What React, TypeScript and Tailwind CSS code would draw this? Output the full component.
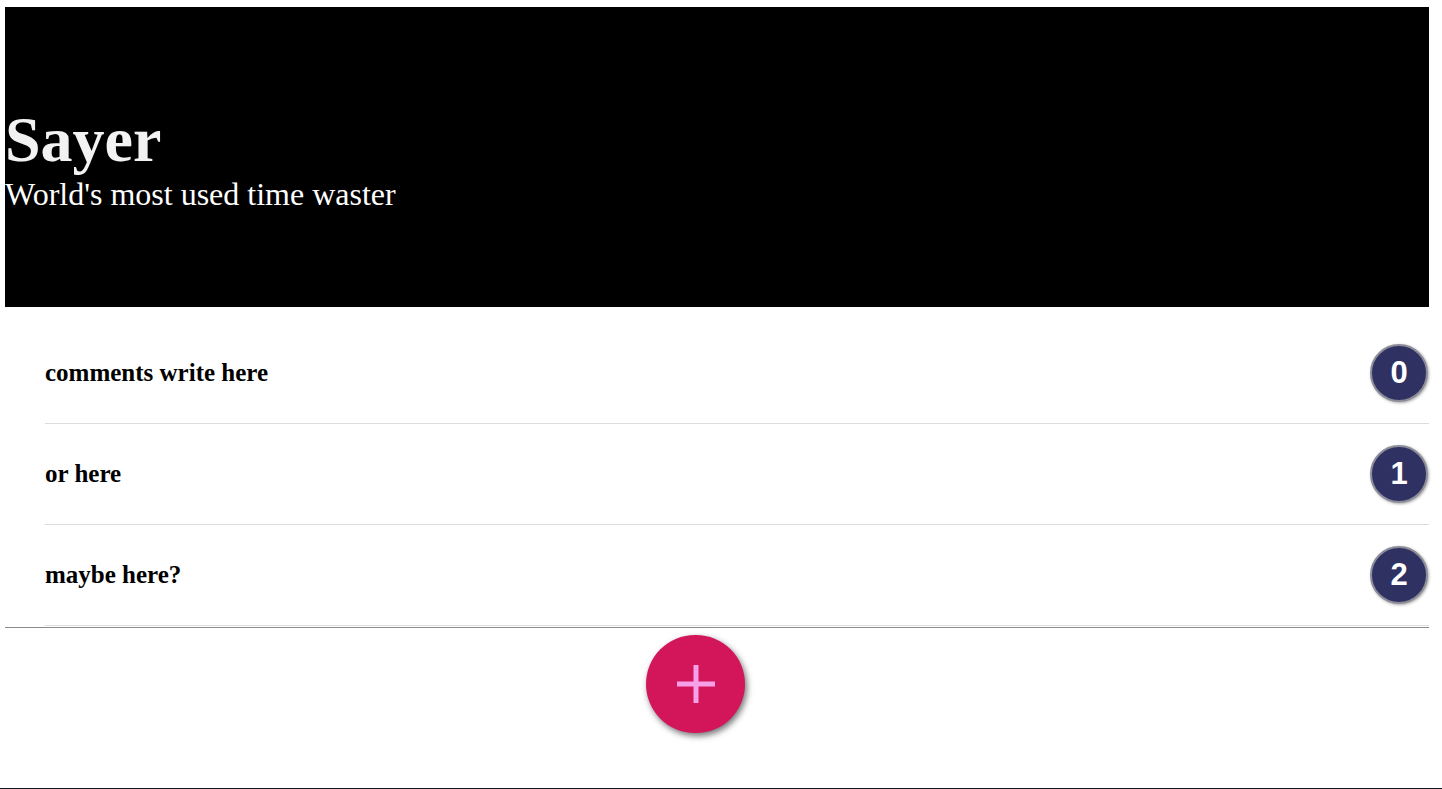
const comments = [
  { text: "comments write here", id: 0 },
  { text: "or here", id: 1 },
  { text: "maybe here?", id: 2 },
];

export default function App() {
  return (
    <div className="min-h-screen bg-white font-['Liberation_Serif',serif]">
      <div className="ml-[5px] mr-[13px] pt-[7px]">
        {/* Header */}
        <header className="h-[300px] pt-[4px] bg-black text-white flex flex-col justify-center">
          <h1 className="text-[64px] font-bold leading-[1.1] text-[#f2f2f2]">Sayer</h1>
          <p className="text-[32px] leading-[1.15]">World's most used time waster</p>
        </header>

        {/* Comments */}
        <ul className="mt-[16px] pl-[40px]">
          {comments.map((c) => (
            <li
              key={c.id}
              className="h-[101px] flex items-center justify-between border-b border-[#dddddd]"
            >
              <span className="text-[25px] font-bold text-black">{c.text}</span>
              <span className="w-[58px] h-[58px] mr-px rounded-full bg-[#2f3163] border-2 border-[#8d8d99] shadow-[1px_1px_3px_rgba(0,0,0,0.35)] flex items-center justify-center text-white text-[31px] font-bold font-['Liberation_Sans',sans-serif]">
                {c.id}
              </span>
            </li>
          ))}
        </ul>
        <div className="mt-px h-px bg-[#8a8a8a]" />

        {/* Add button */}
        <div className="pt-[7px] pl-[641px] h-[160px]">
          <button className="w-[99px] h-[98px] rounded-full bg-[#d3165a] shadow-[2px_3px_6px_rgba(0,0,0,0.55)] flex items-center justify-center">
            <svg width="40" height="40" viewBox="0 0 40 40" aria-hidden="true">
              <rect x="1" y="17.5" width="38" height="5" fill="#f6a0e8" />
              <rect x="17.5" y="1" width="5" height="38" fill="#f6a0e8" />
            </svg>
          </button>
        </div>
      </div>
      <footer className="h-[80px] bg-[#0f1a24]" />
    </div>
  );
}
